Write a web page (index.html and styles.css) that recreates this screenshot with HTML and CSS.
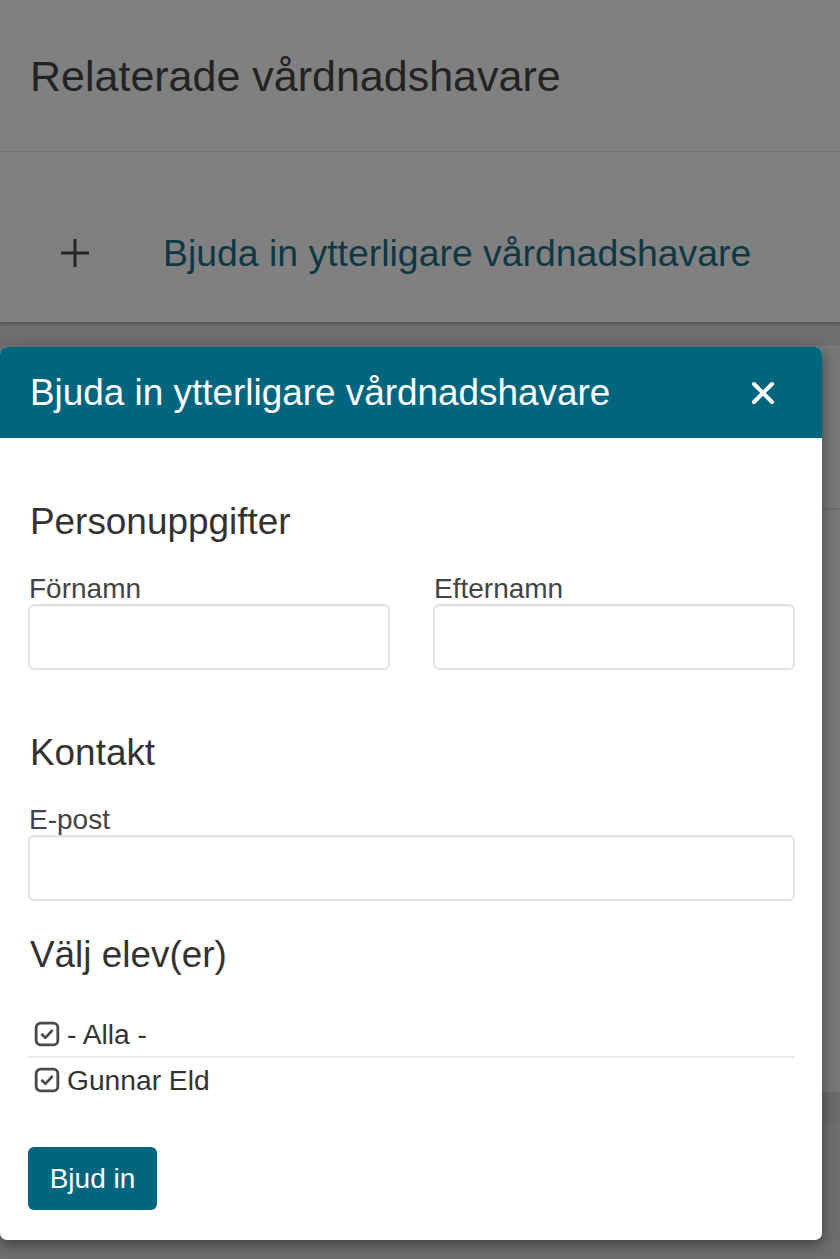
FILE: index.html
```html
<!DOCTYPE html>
<html lang="sv">
<head>
<meta charset="utf-8">
<title>Bjuda in ytterligare vårdnadshavare</title>
<link rel="stylesheet" href="styles.css">
</head>
<body>
<div class="page">
  <section class="card">
    <h1 class="card-title">Relaterade vårdnadshavare</h1>
    <div class="invite-row">
      <svg class="plus" width="30" height="30" viewBox="0 0 30 30" aria-hidden="true">
        <path d="M15 1V29M1 15H29" stroke="#262626" stroke-width="3" fill="none"/>
      </svg>
      <span class="invite-link">Bjuda in ytterligare vårdnadshavare</span>
    </div>
  </section>
  <section class="card card-lower">
    <div class="lower-row lower-row-top"></div>
    <div class="lower-row lower-row-mid"></div>
    <div class="lower-band"></div>
  </section>
</div>

<div class="modal" role="dialog">
  <header class="modal-header">
    <h2 class="modal-title">Bjuda in ytterligare vårdnadshavare</h2>
    <svg class="close" width="24" height="24" viewBox="0 0 24 24" aria-hidden="true">
      <path d="M3 3L21 21M21 3L3 21" stroke="#ffffff" stroke-width="4" stroke-linecap="round" fill="none"/>
    </svg>
  </header>
  <div class="modal-body">
    <section class="form-section section-person">
      <h3 class="section-title">Personuppgifter</h3>
      <div class="field-row">
        <div class="field">
          <label class="field-label">Förnamn</label>
          <div class="input"></div>
        </div>
        <div class="field">
          <label class="field-label">Efternamn</label>
          <div class="input"></div>
        </div>
      </div>
    </section>
    <section class="form-section section-contact">
      <h3 class="section-title">Kontakt</h3>
      <div class="field">
        <label class="field-label">E-post</label>
        <div class="input"></div>
      </div>
    </section>
    <section class="form-section section-students">
      <h3 class="section-title">Välj elev(er)</h3>
      <ul class="check-list">
        <li class="check-item check-item-all">
          <svg class="check-icon" width="26" height="26" viewBox="0 0 24 24" aria-hidden="true">
            <rect x="2" y="2" width="20" height="20" rx="4" stroke="#4a4a4a" stroke-width="2.6" fill="none"/>
            <path d="M7.5 12.5L10.5 15.5L16.5 9" stroke="#4a4a4a" stroke-width="2.4" fill="none" stroke-linecap="round" stroke-linejoin="round"/>
          </svg>
          <span>- Alla -</span>
        </li>
        <li class="check-item">
          <svg class="check-icon" width="26" height="26" viewBox="0 0 24 24" aria-hidden="true">
            <rect x="2" y="2" width="20" height="20" rx="4" stroke="#4a4a4a" stroke-width="2.6" fill="none"/>
            <path d="M7.5 12.5L10.5 15.5L16.5 9" stroke="#4a4a4a" stroke-width="2.4" fill="none" stroke-linecap="round" stroke-linejoin="round"/>
          </svg>
          <span>Gunnar Eld</span>
        </li>
      </ul>
    </section>
    <button class="btn-primary" type="button">Bjud in</button>
  </div>
</div>
</body>
</html>
```

FILE: styles.css
```css
* {
  box-sizing: border-box;
}

html, body {
  margin: 0;
  padding: 0;
}

body {
  position: relative;
  width: 840px;
  height: 1259px;
  overflow: hidden;
  background: #6e6e6e;
  font-family: "Liberation Sans", Arial, sans-serif;
}

/* ---------- dimmed page behind the dialog ---------- */
.page {
  display: flex;
  flex-direction: column;
  gap: 23px;
}

.card {
  background: #808080;
  box-shadow: 0 2px 3px rgba(0, 0, 0, 0.25);
}

.card-title {
  margin: 0;
  height: 152px;
  padding-left: 30px;
  display: flex;
  align-items: center;
  font-size: 43px;
  font-weight: normal;
  line-height: 50px;
  color: #232323;
  border-bottom: 1px solid #747474;
}

.invite-row {
  height: 170px;
  padding: 32px 0 0 60px;
  display: flex;
  align-items: center;
}

.plus {
  flex: none;
  margin-right: 73px;
}

.invite-link {
  font-size: 37.4px;
  line-height: 44px;
  color: #0e3844;
}

.card-lower {
  background: #777777;
  box-shadow: none;
}

.lower-row-top {
  height: 165px;
  border-bottom: 2px solid #6c6c6c;
}

.lower-row-mid {
  height: 582px;
}

.lower-band {
  height: 30px;
  background: #6a6a6a;
}

/* ---------- dialog ---------- */
.modal {
  position: absolute;
  top: 347px;
  left: 0;
  width: 822px;
  background: #ffffff;
  border-radius: 7px;
  box-shadow: 0 4px 14px rgba(0, 0, 0, 0.45);
  overflow: hidden;
}

.modal-header {
  height: 91px;
  background: #006680;
  display: flex;
  align-items: center;
  justify-content: space-between;
  padding: 0 47px 0 30px;
}

.modal-title {
  margin: 0;
  font-size: 36.9px;
  font-weight: normal;
  line-height: 42px;
  color: #ffffff;
}

.close {
  flex: none;
}

.modal-body {
  padding: 63px 27px 30px 28px;
}

.form-section {
  margin: 0;
}

.section-person {
  margin-bottom: 62px;
}

.section-contact {
  margin-bottom: 33px;
}

.section-title {
  margin: 0 0 30px 2px;
  font-size: 36.9px;
  font-weight: normal;
  line-height: 42px;
  color: #333333;
}

.field-row {
  display: grid;
  grid-template-columns: 1fr 1fr;
  column-gap: 43px;
}

.field {
  display: flex;
  flex-direction: column;
}

.field-label {
  font-size: 28px;
  line-height: 31px;
  color: #444444;
  padding-left: 1px;
}

.input {
  height: 66px;
  border: 2px solid #e2e2e2;
  border-radius: 6px;
  background: #ffffff;
  box-shadow: inset 0 1px 1px rgba(0, 0, 0, 0.04);
}

.section-students .section-title {
  margin-bottom: 36px;
}

.check-list {
  list-style: none;
  margin: 0;
  padding: 0;
}

.check-item {
  display: flex;
  align-items: center;
  padding: 6px 0 6px 6px;
  font-size: 28.2px;
  line-height: 32px;
  color: #333333;
}

.check-item-all {
  border-bottom: 2px solid #e6e8ee;
}

.check-icon {
  flex: none;
  margin-right: 7px;
}

.btn-primary {
  margin-top: 45px;
  height: 63px;
  width: 129px;
  padding: 0;
  border: 0;
  border-radius: 6px;
  background: #006680;
  color: #ffffff;
  font-family: "Liberation Sans", Arial, sans-serif;
  font-size: 28px;
  line-height: 32px;
}
```
